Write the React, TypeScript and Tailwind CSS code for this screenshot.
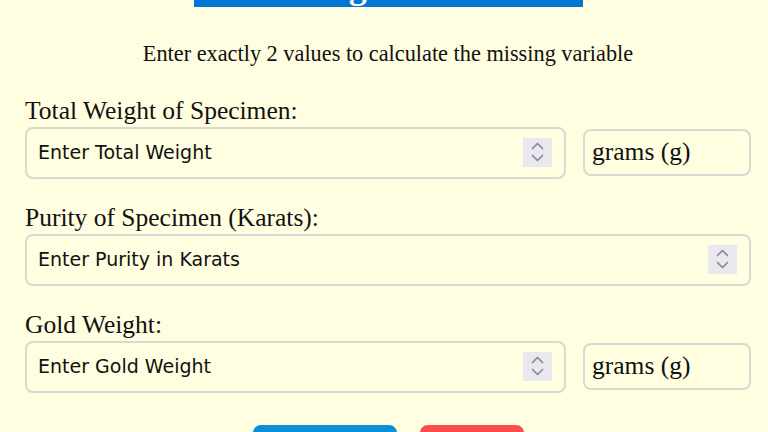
import React from "react";

function Spinner() {
  return (
    <div className="w-[29px] h-[29px] bg-[#e8e8ee] shrink-0">
      <svg width="29" height="29" viewBox="0 0 29 29" fill="none">
        <polyline points="9.5,10.5 14.5,5.5 19.5,10.5" stroke="#8b8b9b" strokeWidth="1.7" strokeLinecap="round" strokeLinejoin="round" />
        <polyline points="9.5,17.5 14.5,22.5 19.5,17.5" stroke="#8b8b9b" strokeWidth="1.7" strokeLinecap="round" strokeLinejoin="round" />
      </svg>
    </div>
  );
}

function Field({ placeholder, wide }: { placeholder: string; wide?: boolean }) {
  return (
    <div
      className={
        (wide ? "w-[726px]" : "w-[541px]") +
        " h-[52px] border-2 border-[#d9d9d3] rounded-[8px] flex items-center pl-[11px] pr-[12px] shrink-0"
      }
    >
      <input
        type="text"
        placeholder={placeholder}
        className="flex-1 min-w-0 bg-transparent outline-none text-[19px] text-[#111] placeholder:text-[#111] font-['DejaVu_Sans',sans-serif]"
      />
      <Spinner />
    </div>
  );
}

function Unit() {
  return (
    <div className="w-[168px] h-[47px] border-2 border-[#d9d9d3] rounded-[8px] flex items-center pl-[7px] text-[25.5px] text-[#111] shrink-0">
      grams (g)
    </div>
  );
}

export default function App() {
  return (
    <div className="min-h-screen bg-[#fffee0] font-['Liberation_Serif',serif] text-[#111] overflow-hidden">
      <div className="ml-[25px] w-[726px] flex flex-col">
        <div className="self-center w-[389px] h-[60px] -mt-[53px] bg-[#0077d5] pt-[21px] text-center">
          <h1 className="text-[36px] leading-none font-bold text-white">Gold Weight Calculator</h1>
        </div>

        <p className="mt-[35.5px] text-center text-[22.3px] leading-[22px]">
          Enter exactly 2 values to calculate the missing variable
        </p>

        <label className="mt-[32px] text-[25.5px] leading-[27px] block">Total Weight of Specimen:</label>
        <div className="mt-[3px] flex items-center gap-[17px]">
          <Field placeholder="Enter Total Weight" />
          <Unit />
        </div>

        <label className="mt-[25px] text-[25.5px] leading-[27px] block">Purity of Specimen (Karats):</label>
        <div className="mt-[3px] flex items-center">
          <Field placeholder="Enter Purity in Karats" wide />
        </div>

        <label className="mt-[25px] text-[25.5px] leading-[27px] block">Gold Weight:</label>
        <div className="mt-[3px] flex items-center gap-[17px]">
          <Field placeholder="Enter Gold Weight" />
          <Unit />
        </div>

        <div className="mt-[32px] flex justify-center gap-[23px]">
          <button className="w-[144px] h-[46px] rounded-[8px] bg-[#0a90d8] text-white text-[20px]">Calculate</button>
          <button className="w-[104px] h-[46px] rounded-[8px] bg-[#ff4b4b] text-white text-[20px]">Clear</button>
        </div>
      </div>
    </div>
  );
}
